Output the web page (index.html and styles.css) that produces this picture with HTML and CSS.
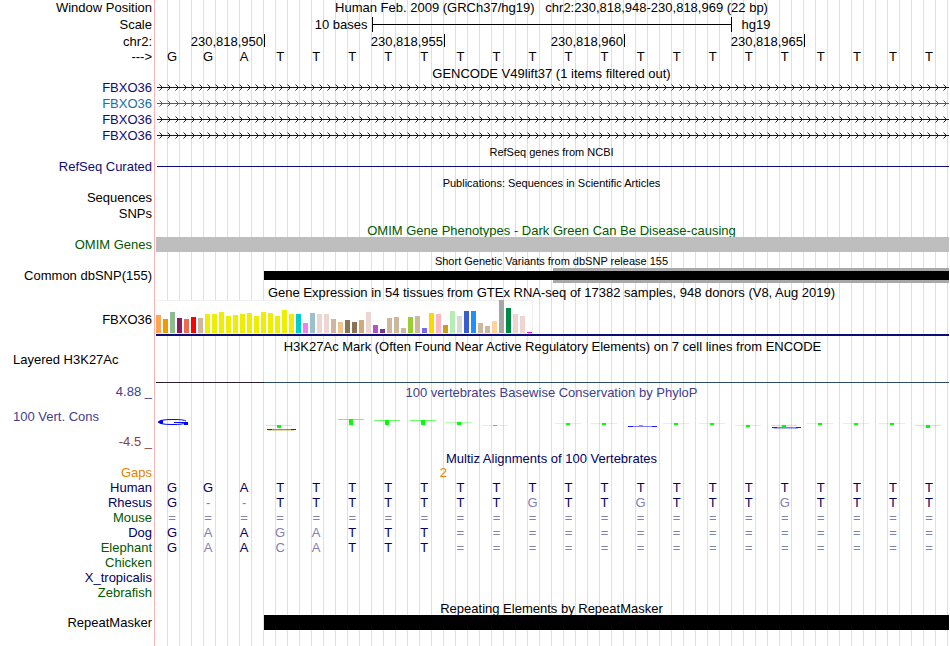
FILE: index.html
```html
<!DOCTYPE html>
<html lang="en">
<head>
  <meta charset="UTF-8">
  <meta name="viewport" content="width=device-width, initial-scale=1.0">
  <title>Human chr2:230,818,948-230,818,969 Genome Browser</title>
  <link rel="stylesheet" href="styles.css">
</head>
<body>
  <svg class="defs" width="0" height="0" aria-hidden="true">
    <defs>
      <pattern id="arrows-navy" width="8" height="16" patternUnits="userSpaceOnUse">
        <path d="M0 7.5h8M2.5 4.5l3 3l-3 3" fill="none" stroke="#0c0c78"/>
      </pattern>
      <pattern id="arrows-blue" width="8" height="16" patternUnits="userSpaceOnUse">
        <path d="M0 7.5h8M2.5 4.5l3 3l-3 3" fill="none" stroke="#1470b0"/>
      </pattern>
    </defs>
  </svg>

  <main class="browser">
    <!-- ruler -->
    <div class="row">
      <div class="label">Window Position</div>
      <div class="track title title-main">Human Feb. 2009 (GRCh37/hg19) &nbsp; chr2:230,818,948-230,818,969 (22 bp)</div>
    </div>
    <div class="row row-ruler">
      <div class="label">Scale</div>
      <div class="track scale">
        <span class="scale-left">10 bases</span>
        <span class="scale-bar"></span>
        <span class="scale-right">hg19</span>
      </div>
    </div>
    <div class="row row-ruler">
      <div class="label">chr2:</div>
      <div class="track ticks">
        <span class="tick tick-first">230,818,950</span>
        <span class="tick">230,818,955</span>
        <span class="tick">230,818,960</span>
        <span class="tick">230,818,965</span>
      </div>
    </div>
    <div class="row row-bases">
      <div class="label">---&gt;</div>
      <div class="track bases">GGATTTTTTTTTTTTTTTTTTT</div>
    </div>

    <!-- genes -->
    <div class="row row-title"><div class="track title">GENCODE V49lift37 (1 items filtered out)</div></div>
    <div class="row navy">
      <div class="label">FBXO36</div>
      <div class="track gene"><svg class="arrows"><rect width="100%" height="16" fill="url(#arrows-navy)"/></svg></div>
    </div>
    <div class="row blue">
      <div class="label">FBXO36</div>
      <div class="track gene"><svg class="arrows"><rect width="100%" height="16" fill="url(#arrows-blue)"/></svg></div>
    </div>
    <div class="row navy">
      <div class="label">FBXO36</div>
      <div class="track gene"><svg class="arrows"><rect width="100%" height="16" fill="url(#arrows-navy)"/></svg></div>
    </div>
    <div class="row navy">
      <div class="label">FBXO36</div>
      <div class="track gene"><svg class="arrows"><rect width="100%" height="16" fill="url(#arrows-navy)"/></svg></div>
    </div>

    <div class="row row-small"><div class="track title small">RefSeq genes from NCBI</div></div>
    <div class="row navy">
      <div class="label">RefSeq Curated</div>
      <div class="track gene"><div class="intron"></div></div>
    </div>

    <div class="row row-small"><div class="track title small">Publications: Sequences in Scientific Articles</div></div>
    <div class="row"><div class="label">Sequences</div></div>
    <div class="row"><div class="label">SNPs</div></div>

    <!-- variants -->
    <div class="row row-item green"><div class="track title">OMIM Gene Phenotypes - Dark Green Can Be Disease-causing</div></div>
    <div class="row row-item green">
      <div class="label">OMIM Genes</div>
      <div class="track items"><div class="item item-omim"></div></div>
    </div>

    <div class="row"><div class="track title small">Short Genetic Variants from dbSNP release 155</div></div>
    <div class="row row-item">
      <div class="label">Common dbSNP(155)</div>
      <div class="track items snp"><div class="item item-range"></div><div class="item item-snp"></div></div>
    </div>

    <!-- expression -->
    <div class="row row-ruler"><div class="track title">Gene Expression in 54 tissues from GTEx RNA-seq of 17382 samples, 948 donors (V8, Aug 2019)</div></div>
    <div class="row row-gtex">
      <div class="label">FBXO36</div>
      <div class="track items gtex"><div class="chart" id="gtex"></div></div>
    </div>

    <div class="row row-h3k">
      <div class="label label-left">Layered H3K27Ac</div>
      <div class="track items h3k">
        <div class="title">H3K27Ac Mark (Often Found Near Active Regulatory Elements) on 7 cell lines from ENCODE</div>
        <div class="signal"></div>
      </div>
    </div>

    <!-- conservation -->
    <div class="row row-cons">
      <div class="label label-left">
        <span>100 Vert. Cons</span>
        <span class="limits"><span>4.88 _</span><span class="limit-min">-4.5 _</span></span>
      </div>
      <div class="track cons">
        <div class="title">100 vertebrates Basewise Conservation by PhyloP</div>
        <div class="logo" id="phylop"></div>
      </div>
    </div>

    <div class="row row-title dark"><div class="track title">Multiz Alignments of 100 Vertebrates</div></div>
    <div class="row row-item orange">
      <div class="label">Gaps</div>
      <div class="track gaps"><span class="gap">2</span></div>
    </div>
    <div class="row row-item dark">
      <div class="label">Human</div>
      <div class="track bases">GGATTTTTTTTTTTTTTTTTTT</div>
    </div>
    <div class="row row-item dark">
      <div class="label">Rhesus</div>
      <div class="track bases">G--TTTTTTTgTTgTTTgTTTT</div>
    </div>
    <div class="row row-item green">
      <div class="label">Mouse</div>
      <div class="track bases">======================</div>
    </div>
    <div class="row row-item dark">
      <div class="label">Dog</div>
      <div class="track bases">GaAgaTTT==============</div>
    </div>
    <div class="row row-item green">
      <div class="label">Elephant</div>
      <div class="track bases">GaAcaTTT==============</div>
    </div>
    <div class="row row-item green"><div class="label">Chicken</div></div>
    <div class="row row-item dark"><div class="label">X_tropicalis</div></div>
    <div class="row row-item green"><div class="label">Zebrafish</div></div>

    <!-- repeats -->
    <div class="row row-item"><div class="track title">Repeating Elements by RepeatMasker</div></div>
    <div class="row row-item">
      <div class="label">RepeatMasker</div>
      <div class="track items"><div class="item item-repeat"></div></div>
    </div>
  </main>

  <script src="script.js"></script>
</body>
</html>
```
FILE: styles.css
```css
body {
  margin: 0;
  background: #fff;
  color: #000;
  font: 13px/16px "Liberation Sans", Arial, Helvetica, sans-serif;
}
.defs {
  display: block;
}
.browser {
  box-sizing: border-box;
  min-height: 100vh;
  padding-right: 1px;
  /* label column, its pink border, then a guide line every 12px */
  background:
    linear-gradient(#fff, #fff) 0 0 / 154px 100% no-repeat,
    linear-gradient(#ffb4b4, #ffb4b4) 154px 0 / 1px 100% no-repeat,
    linear-gradient(#fff, #fff) 155px 0 / 10px 100% no-repeat,
    linear-gradient(90deg, #dcdcf8 1px, transparent 1px) 11px 0 / 12px 100%;
  overflow: hidden;
}
.row {
  display: grid;
  grid-template-columns: 154px minmax(0, 1fr);
  grid-template-rows: 100%;
  height: 16px;
  line-height: 16px;
  white-space: nowrap;
}
.row-ruler {
  height: 17px;
  line-height: 18px;
}
.row-title {
  height: 14px;
  line-height: 14px;
}
.row-small,
.row-item {
  height: 15px;
  line-height: 15px;
}
.row-bases {
  line-height: 14px;
}
.row-gtex {
  height: 36px;
  line-height: 39px;
}
.row-h3k {
  height: 47px;
}
.row-cons {
  height: 68px;
  color: #40408c;
}
.label {
  padding-right: 2px;
  text-align: right;
}
.label-left {
  display: flex;
  align-items: center;
  justify-content: space-between;
  padding-left: 13px;
}
.track {
  grid-column: 2;
}
.title {
  box-sizing: border-box;
  padding-top: 1px;
  text-align: center;
}
.title-main {
  padding-top: 0;
}
.small {
  font-size: 11px;
}
.navy {
  color: #0c0c78;
}
.blue {
  color: #1470b0;
}
.dark {
  color: #000064;
}
.green {
  color: #005a00;
}
.orange {
  color: #e68200;
}

/* ruler */
.scale {
  display: grid;
  grid-template-columns: 6fr 10fr 6fr;
  padding-left: 1px;
}
.scale-left {
  padding-right: 4px;
  text-align: right;
}
.scale-right {
  padding-left: 9px;
}
.scale-bar {
  box-sizing: border-box;
  height: 15px;
  margin-top: 1px;
  border: solid #000;
  border-width: 0 1px;
  background: linear-gradient(#000, #000) 0 7px / 100% 1px no-repeat;
}
.ticks,
.bases,
.gaps {
  display: grid;
  grid-template-columns: repeat(22, minmax(0, 1fr));
}
.ticks {
  padding-left: 3px;
}
.tick {
  grid-column: span 5;
  height: 13px;
  margin-top: 1px;
  padding-right: 1px;
  border-right: 1px solid #000;
  line-height: 16px;
  text-align: right;
}
.tick-first {
  grid-column: span 3;
}
.bases,
.gaps {
  padding-right: 2px;
  text-align: center;
}
.bases {
  color: #000064;
}
.row-bases .bases {
  color: #000;
}
.bases .mismatch {
  color: #8080b4;
}
.gap {
  grid-column: 8 / span 2;
  padding-left: 2px;
}

/* items */
.gene {
  padding-left: 3px;
}
.arrows {
  display: block;
  width: 100%;
  height: 16px;
}
.intron {
  height: 1px;
  margin-top: 7px;
  background: #0c0c78;
}
.items {
  margin-left: 2px;
}
.item {
  height: 15px;
  background: #000;
}
.item-omim {
  background: #bebebe;
}
.item-snp,
.item-repeat {
  margin-left: calc(300% / 22);
}
.snp {
  display: grid;
  align-items: center;
}
.snp .item {
  grid-area: 1 / 1;
}
.item-range {
  margin-left: 50%;
  background: #a8a8a8;
}
.snp .item-snp {
  height: 9px;
}

/* expression */
.gtex {
  border-bottom: 2px solid #0c0c78;
}
.chart {
  display: inline-flex;
  align-items: flex-end;
  gap: 2px;
  box-sizing: border-box;
  height: 34px;
  border: solid #f0f0f0;
  border-width: 1px 1px 1px 0;
  background: #fff;
  vertical-align: top;
}
.bar {
  width: 5px;
}
.h3k,
.cons {
  display: flex;
  flex-direction: column;
  justify-content: space-between;
}
.h3k .title {
  padding-top: 3px;
}
.signal {
  height: 1px;
  background: linear-gradient(90deg, #28202c calc(300% / 22), #2c4c68 0);
}

/* conservation */
.limits {
  display: flex;
  flex-direction: column;
  justify-content: space-between;
  height: 66px;
}
.limit-min {
  color: #8c4040;
}
.cons .title {
  padding-top: 2px;
}
.logo {
  display: grid;
  grid-template-columns: repeat(22, minmax(0, 1fr));
  padding: 0 2px 20px 0;
}
.logo svg {
  display: block;
  width: 36px;
  height: 13px;
}
```
FILE: script.js
```js
// one cell per base, lower case marks a mismatch
document.querySelectorAll('.bases').forEach(track => {
  const bases = track.textContent.trim().split('');
  track.textContent = '';
  bases.forEach(base => {
    const cell = document.createElement('span');
    cell.textContent = base.toUpperCase();
    if (base !== base.toUpperCase() || base === '-' || base === '=') {
      cell.className = 'mismatch';
    }
    track.appendChild(cell);
  });
});

// GTEx tissues: colour, height
const tissues = [
  ['#ffa54f', 18], ['#ee9a00', 14], ['#8fbc8f', 21], ['#8b1c62', 15], ['#ee6a50', 14], ['#ff0000', 16],
  ['#cdb79e', 15], ['#eeee00', 19], ['#eeee00', 19], ['#eeee00', 21], ['#eeee00', 17], ['#eeee00', 18],
  ['#eeee00', 19], ['#eeee00', 20], ['#eeee00', 17], ['#eeee00', 21], ['#eeee00', 20], ['#eeee00', 17],
  ['#eeee00', 23], ['#eeee00', 19], ['#00cdcd', 19], ['#ee82ee', 10], ['#9ac0cd', 20], ['#eed5d2', 19],
  ['#eed5d2', 19], ['#cdb79e', 14], ['#eec591', 11], ['#8b7355', 13], ['#8b7355', 11], ['#cdaa7d', 13],
  ['#eed5d2', 21], ['#b452cd', 8], ['#7a378b', 4], ['#cdb79e', 15], ['#cdb79e', 16], ['#cdb79e', 5],
  ['#9acd32', 16], ['#cdb79e', 17], ['#7a67ee', 5], ['#ffd700', 20], ['#ffb6c1', 19], ['#cd9b1d', 8],
  ['#b4eeb4', 22], ['#d9d9d9', 17], ['#3a5fcd', 22], ['#1e90ff', 22], ['#cdb79e', 10], ['#cdb79e', 7],
  ['#ffd39b', 12], ['#a6a6a6', 33], ['#008b45', 25], ['#eed5d2', 19], ['#eed5d2', 17], ['#ff00ff', 1]
];
const chart = document.getElementById('gtex');
tissues.forEach(([color, height]) => {
  const bar = document.createElement('div');
  bar.className = 'bar';
  bar.style.height = `${height}px`;
  bar.style.background = color;
  chart.appendChild(bar);
});

// PhyloP logo letters, flattened by their score
const flatT = (y, height, opacity) =>
  `<rect x="4" y="${y}" width="26" height="1" fill="#00ff00" opacity="${opacity}"/>` +
  `<rect x="15" y="${y}" width="4" height="${height}" fill="#00ff00"/>`;
const flatG = y =>
  `<path d="M5 ${y + 0.5}h29" stroke="#0000ff" opacity=".5"/>` +
  `<path d="M5 ${y + 0.5}h5M29 ${y + 0.5}h5" stroke="#0000ff" opacity=".8"/>`;
const logo = {
  0: '<path d="M32 3Q30 1.500 19 1.500Q5 1.500 5 4Q5 6.500 19 6.500Q29 6.500 31 5" fill="none" stroke="#0000ff"/>' +
     '<path d="M4 4Q4 2.500 9 2v4Q4 5.500 4 4M30 4h4v3h-4z" fill="#0000ff"/><path d="M20 4.500h12" stroke="#0000ff"/>',
  3: flatT(7, 3, 0.3) + flatG(11) + '<path d="M6 12.500h26" stroke="#c8b45a" opacity=".5"/>',
  5: flatT(1, 6, 0.6),
  6: flatT(2, 5, 0.6),
  7: flatT(2, 5, 0.6),
  8: flatT(4, 3, 0.3),
  9: flatT(7, 1, 0.2),
  11: flatT(5, 2, 0.2),
  12: flatT(5, 2, 0.2),
  13: '<rect x="16" y="7" width="4" height="1" fill="#00ff00"/>' + flatG(8),
  14: flatT(5, 2, 0.2),
  15: flatT(5, 2, 0.2),
  16: flatT(7, 2, 0.2),
  17: flatT(7, 2, 0.3) + flatG(9) + '<path d="M7 10.500h24" stroke="#0000ff" opacity=".3"/>',
  18: flatT(5, 2, 0.2),
  19: flatT(5, 2, 0.2),
  20: flatT(5, 2, 0.2),
  21: flatT(7, 3, 0.3)
};
const phylop = document.getElementById('phylop');
for (let i = 0; i < 22; i++) {
  phylop.insertAdjacentHTML('beforeend', `<svg viewBox="0 0 36 13">${logo[i] || ''}</svg>`);
}
```
